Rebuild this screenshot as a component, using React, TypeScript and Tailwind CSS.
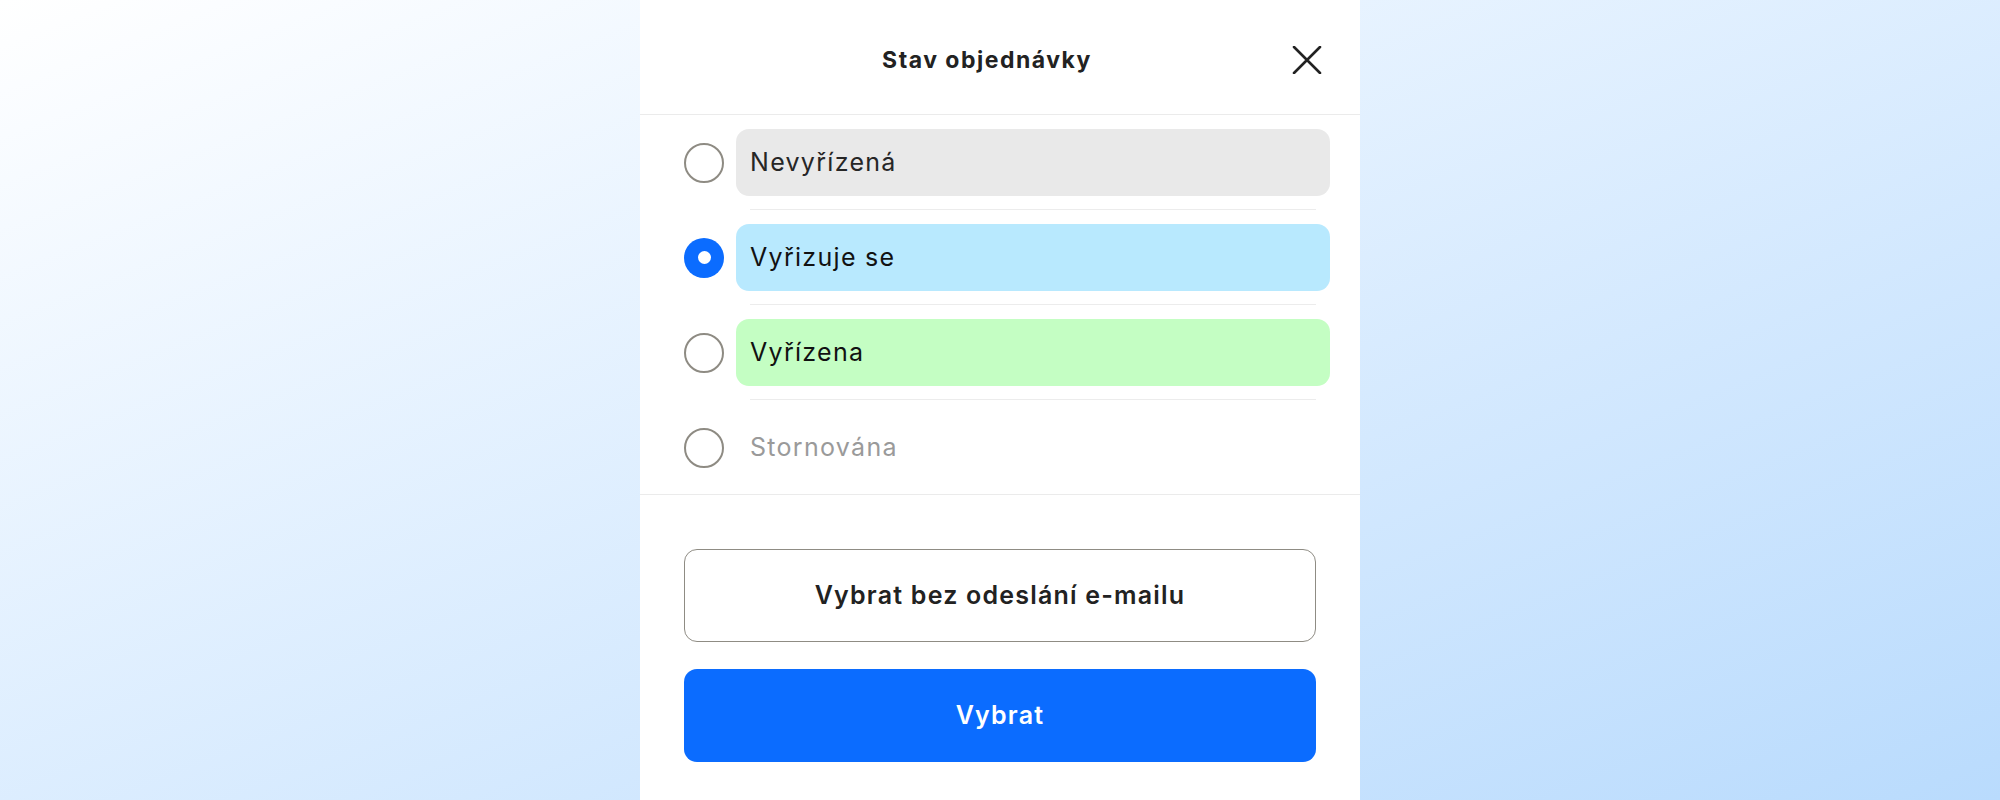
import React from "react";

type Item = { label: string; bg: string; text: string; selected?: boolean };

const items: Item[] = [
  { label: "Nevyřízená", bg: "bg-[#e9e9e9]", text: "text-[#262626]" },
  { label: "Vyřizuje se", bg: "bg-[#b8e9fe]", text: "text-[#111111]", selected: true },
  { label: "Vyřízena", bg: "bg-[#c4fec3]", text: "text-[#111111]" },
  { label: "Stornována", bg: "bg-transparent", text: "text-[#9a9a9a]" },
];

function Radio({ selected }: { selected?: boolean }) {
  if (selected) {
    return (
      <div className="w-[40px] h-[40px] shrink-0 rounded-full bg-[#0b6cff] flex items-center justify-center">
        <div className="w-[13px] h-[13px] rounded-full bg-white" />
      </div>
    );
  }
  return <div className="w-[40px] h-[40px] shrink-0 rounded-full border-2 border-[#8e8b83] bg-white" />;
}

export default function App() {
  return (
    <div
      className="w-full h-[800px] flex justify-center bg-linear-to-br from-white to-[#b9dbfd]"
      style={{ fontFamily: "Inter, 'Noto Sans', sans-serif" }}
    >
      <div className="w-[720px] h-[800px] bg-white flex flex-col">
        <div className="h-[115px] pt-[6px] border-b border-[#ebebeb] flex items-center">
          <div className="flex-1 pl-[42px] text-center text-[23px] font-bold text-[#222222] tracking-[1.5px]">
            Stav objednávky
          </div>
          <div className="flex justify-end pr-[38px]">
            <svg width="30" height="28" viewBox="0 0 30 28" fill="none">
              <path d="M2 1 L28 27 M28 1 L2 27" stroke="#222222" strokeWidth="2.6" strokeLinecap="round" />
            </svg>
          </div>
        </div>

        <div className="flex flex-col pt-[14px] pb-[13px]">
          {items.map((it, i) => (
            <React.Fragment key={it.label}>
              <div className="flex items-center gap-[12px] pl-[44px] pr-[30px]">
                <Radio selected={it.selected} />
                <div className={`flex-1 h-[67px] rounded-[13px] flex items-center pl-[14px] ${it.bg}`}>
                  <span className={`text-[25px] tracking-[1.3px] ${it.text}`}>{it.label}</span>
                </div>
              </div>
              {i < items.length - 1 && (
                <div className="h-px bg-[#ececec] mt-[13px] mb-[14px] ml-[110px] mr-[44px]" />
              )}
            </React.Fragment>
          ))}
        </div>

        <div className="border-t border-[#ebebeb] flex flex-col gap-[27px] px-[44px] pt-[54px]">
          <button className="h-[93px] rounded-[13px] border-[1.5px] border-[#8f8c84] bg-white text-[25px] tracking-[1.2px] font-semibold text-[#222222]">
            Vybrat bez odeslání e-mailu
          </button>
          <button className="h-[93px] rounded-[13px] bg-[#0b6cff] text-[25px] tracking-[1.2px] font-semibold text-white">
            Vybrat
          </button>
        </div>
      </div>
    </div>
  );
}
